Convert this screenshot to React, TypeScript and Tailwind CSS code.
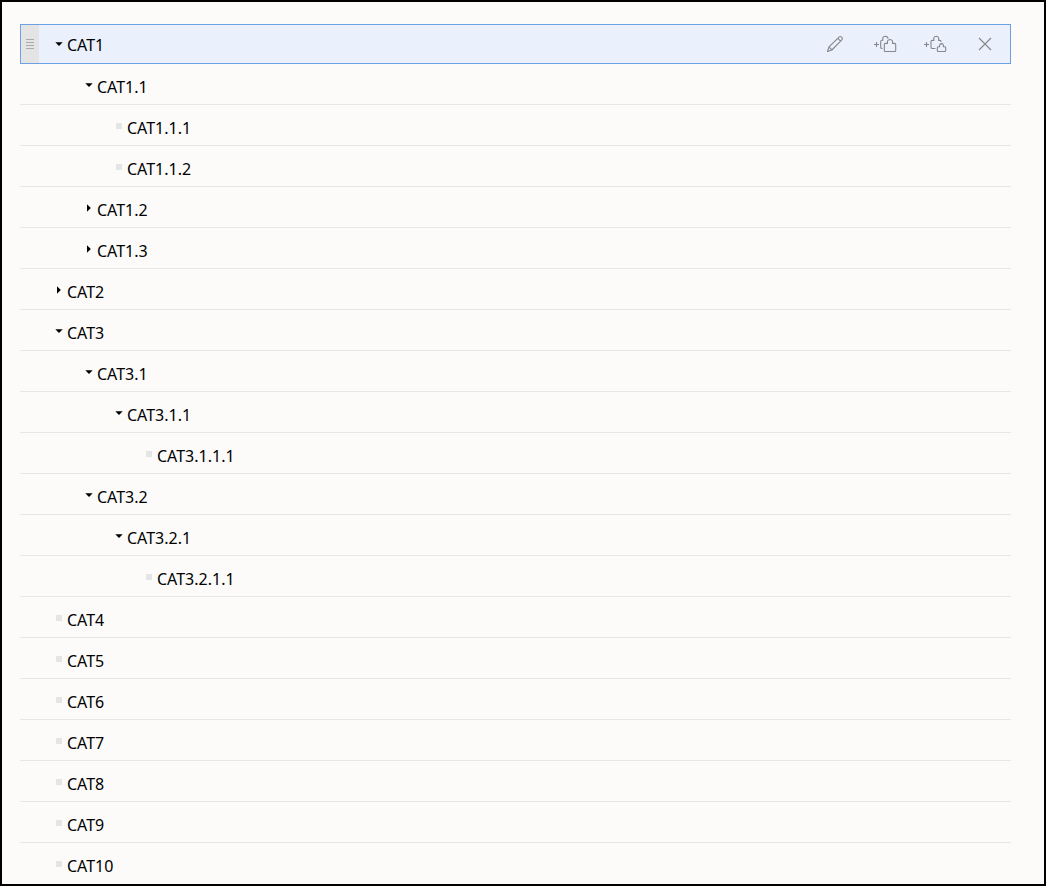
import React, { useState } from "react";

type Category = { name: string; open?: boolean; children?: Category[] };

const categories: Category[] = [
  {
    name: "CAT1",
    open: true,
    children: [
      { name: "CAT1.1", open: true, children: [{ name: "CAT1.1.1" }, { name: "CAT1.1.2" }] },
      { name: "CAT1.2", children: [{ name: "CAT1.2.1" }] },
      { name: "CAT1.3", children: [{ name: "CAT1.3.1" }] },
    ],
  },
  { name: "CAT2", children: [{ name: "CAT2.1" }] },
  {
    name: "CAT3",
    open: true,
    children: [
      {
        name: "CAT3.1",
        open: true,
        children: [{ name: "CAT3.1.1", open: true, children: [{ name: "CAT3.1.1.1" }] }],
      },
      {
        name: "CAT3.2",
        open: true,
        children: [{ name: "CAT3.2.1", open: true, children: [{ name: "CAT3.2.1.1" }] }],
      },
    ],
  },
  { name: "CAT4" },
  { name: "CAT5" },
  { name: "CAT6" },
  { name: "CAT7" },
  { name: "CAT8" },
  { name: "CAT9" },
  { name: "CAT10" },
];

const indents = ["pl-[31px]", "pl-[61px]", "pl-[91px]", "pl-[121px]"];

function Marker({ item, open, onToggle }: { item: Category; open: boolean; onToggle: () => void }) {
  if (!item.children) {
    return (
      <span className="flex w-[14px] shrink-0 justify-center">
        <span className="mb-px size-[6px] bg-[#e4e6e5]" />
      </span>
    );
  }
  return (
    <button
      type="button"
      aria-label={(open ? "Collapse " : "Expand ") + item.name}
      onClick={onToggle}
      className="flex w-[14px] shrink-0 justify-center pb-px"
    >
      <svg width="8" height="8" viewBox="0 0 8 8" fill="#000">
        {open ? <path d="M0.3 2.2h7.4L4 5.9z" /> : <path d="M2 0.3v7.4L5.8 4z" />}
      </svg>
    </button>
  );
}

function Icon({ children }: { children: React.ReactNode }) {
  return (
    <svg
      width="24"
      height="20"
      viewBox="0 0 24 20"
      fill="none"
      stroke="#85878a"
      strokeWidth="1.1"
      strokeLinejoin="round"
    >
      {children}
    </svg>
  );
}

function ActionButton({ label, children }: { label: string; children: React.ReactNode }) {
  return (
    <button type="button" aria-label={label} className="flex h-full w-[50px] items-center justify-center">
      <Icon>{children}</Icon>
    </button>
  );
}

function RowActions() {
  return (
    <div className="ml-auto flex h-full">
      <ActionButton label="Edit">
        <path d="M4.5 17.5l1.5-4.6L16.3 2.9q1-.8 1.9 0l.8.8q.9 1 0 1.9L8.9 16zM14.8 4.3l2.8 2.8M6 12.9l2.9 3.1" />
      </ActionButton>
      <ActionButton label="Add sibling category">
        <path d="M1 10.5h5M3.5 8v5" />
        <path d="M9.5 14.5H9q-1.3 0-1.3-1.3V7.5q0-1.3 1.3-1.3h.9q-.9-3.7 2.3-4 2.8.1 2.8 2.5" />
        <path d="M12.3 17.5q-1 0-1-1.1v-5.7q0-1.3 1.3-1.3h1.9q-.6-3.7 2.5-3.9 3.1.2 2.5 3.9h1.9q1.3 0 1.3 1.3v5.7q0 1.1-1 1.1z" />
      </ActionButton>
      <ActionButton label="Add child category">
        <path d="M1 10.5h5M3.5 8v5" />
        <path d="M12.5 14.5H9.3q-1.3 0-1.3-1.3V7.7q0-1.3 1.3-1.3h1.6q-.8-4 2.3-4.2 3.1.2 2.4 4.2h1.2q1.3 0 1.3 1.3v.4" />
        <path d="M15.3 17.5q-1 0-1-1v-2.7q0-1 1-1h1.3q-.4-3 1.9-3.2 2.3.2 1.9 3.2h1.3q1 0 1 1v2.7q0 1-1 1z" />
      </ActionButton>
      <ActionButton label="Delete">
        <path d="M6 4l12 12M18 4L6 16" />
      </ActionButton>
    </div>
  );
}

export default function App() {
  const [expanded, setExpanded] = useState<Record<string, boolean>>({});
  const [selected, setSelected] = useState("CAT1");

  const rows: { item: Category; depth: number; open: boolean }[] = [];
  const collect = (items: Category[], depth: number) => {
    for (const item of items) {
      const open = expanded[item.name] ?? !!item.open;
      rows.push({ item, depth, open });
      if (open && item.children) collect(item.children, depth + 1);
    }
  };
  collect(categories, 0);

  return (
    <main className="min-h-screen border-2 border-black bg-[#fcfbfa] pt-[22px] pr-[33px] pl-[18px] font-['Noto_Sans',sans-serif] text-[16px] leading-[20px] text-black">
      <ul role="tree" aria-label="Categories">
        {rows.map(({ item, depth, open }) => {
          const active = item.name === selected;
          return (
            <li
              key={item.name}
              role="treeitem"
              aria-level={depth + 1}
              aria-selected={active}
              aria-expanded={item.children ? open : undefined}
              onClick={() => setSelected(item.name)}
              className={
                active
                  ? "relative flex h-10 items-center border border-[#6ea1e4] bg-[#eaf1fc]"
                  : "flex h-[41px] items-center border-b border-[#e5e7e9] pt-[3px] pl-px last:border-b-transparent"
              }
            >
              {active && (
                <span className="absolute inset-y-0 left-0 flex w-[18px] flex-col items-center justify-center gap-[2px] bg-[#e4e4e4]">
                  <span className="h-px w-2 bg-[#aaaaaa]" />
                  <span className="h-px w-2 bg-[#aaaaaa]" />
                  <span className="h-px w-2 bg-[#aaaaaa]" />
                  <span className="h-px w-2 bg-[#aaaaaa]" />
                </span>
              )}
              <div className={"flex items-center gap-px " + indents[depth]}>
                <Marker
                  item={item}
                  open={open}
                  onToggle={() => setExpanded((prev) => ({ ...prev, [item.name]: !open }))}
                />
                <span className="pt-[2px]">{item.name}</span>
              </div>
              {active && <RowActions />}
            </li>
          );
        })}
      </ul>
    </main>
  );
}
